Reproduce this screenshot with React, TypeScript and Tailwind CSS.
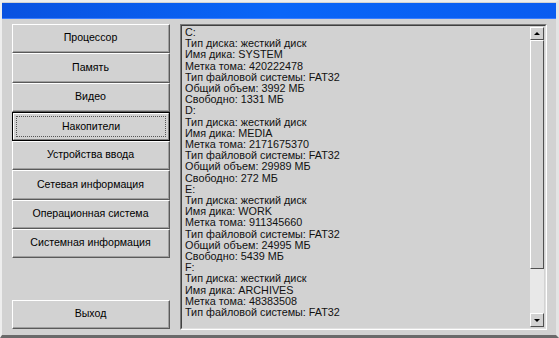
import React from "react";

const buttons = [
  "Процессор",
  "Память",
  "Видео",
  "Накопители",
  "Устройства ввода",
  "Сетевая информация",
  "Операционная система",
  "Системная информация",
];

const drives = [
  { letter: "C:", name: "SYSTEM", label: "420222478", total: "3992", free: "1331" },
  { letter: "D:", name: "MEDIA", label: "2171675370", total: "29989", free: "272" },
  { letter: "E:", name: "WORK", label: "911345660", total: "24995", free: "5439" },
];

const lines: string[] = [];
drives.forEach((d) => {
  lines.push(d.letter);
  lines.push("Тип диска: жесткий диск");
  lines.push("Имя дика: " + d.name);
  lines.push("Метка тома: " + d.label);
  lines.push("Тип файловой системы: FAT32");
  lines.push("Общий объем: " + d.total + " МБ");
  lines.push("Свободно: " + d.free + " МБ");
});
lines.push("F:", "Тип диска: жесткий диск", "Имя дика: ARCHIVES", "Метка тома: 48383508", "Тип файловой системы: FAT32");

const WinButton = ({ label, focused }: { label: string; focused?: boolean }) => {
  if (focused) {
    return (
      <div className="h-[29.3px] border border-black">
        <div className="h-full border-t border-l border-white border-r border-b border-r-[#808080] border-b-[#808080] p-[2px]">
          <div className="h-full border border-dotted border-[#555] flex items-center justify-center text-[10.6px] text-black">
            {label}
          </div>
        </div>
      </div>
    );
  }
  return (
    <div className="h-[29.3px] border-t border-l border-white border-r border-b border-r-[#5a5a5a] border-b-[#5a5a5a]">
      <div className="h-full border-r border-b border-r-[#a0a0a0] border-b-[#a0a0a0] flex items-center justify-center text-[10.6px] text-black">
        {label}
      </div>
    </div>
  );
};

export default function App() {
  return (
    <div
      className="w-[559px] h-[338px] bg-[#d2d2d2] flex flex-col border-l-2 border-t-2 border-l-[#eeeeee] border-t-[#eeeeee] border-r-[3px] border-b-[3px] border-r-[#e4e4e4] border-b-[#6a6a6a] overflow-hidden"
      style={{ fontFamily: '"Liberation Sans", Arial, sans-serif' }}
    >
      <div className="h-[16px] mt-[1px] bg-gradient-to-r from-[#0a52e0] via-[#0a66f8] to-[#0a5cf0] border-b border-[#3a7cff]" />
      <div className="flex gap-[10px] pl-[10px] pr-[9px] pt-[5px]">
        <div className="w-[158px] h-[306px] flex flex-col">
          {buttons.map((b) => (
            <WinButton key={b} label={b} focused={b === "Накопители"} />
          ))}
          <div className="mt-auto mb-[1px]">
            <WinButton label="Выход" />
          </div>
        </div>
        <div className="w-[367px] h-[306px] border-t border-l border-[#7a7a7a] border-r border-b border-r-white border-b-white">
          <div className="h-full border-t border-l border-[#404040] border-r border-b border-r-[#e0e0e0] border-b-[#e0e0e0] flex">
            <div className="flex-1 pl-[3px] pt-[1px] text-[10.8px] leading-[11.2px] text-[#111] overflow-hidden">
              {lines.map((l, i) => (
                <div key={i} className="whitespace-nowrap">{l}</div>
              ))}
            </div>
            <div className="w-[14px] my-[1px] mr-[1px] flex flex-col bg-[#e8e8e8]">
              <div className="h-[13px] border-t border-l border-white border-r border-b border-r-[#505050] border-b-[#505050] bg-[#d2d2d2] flex items-center justify-center">
                <div className="w-0 h-0 border-l-[3px] border-r-[3px] border-b-[3px] border-l-transparent border-r-transparent border-b-black" />
              </div>
              <div className="h-[229px] border-t border-l border-white border-r border-b border-r-[#505050] border-b-[#505050] bg-[#d2d2d2]" />
              <div className="flex-1" />
              <div className="h-[14px] border-t border-l border-white border-r border-b border-r-[#505050] border-b-[#505050] bg-[#d2d2d2] flex items-center justify-center">
                <div className="w-0 h-0 border-l-[3px] border-r-[3px] border-t-[3px] border-l-transparent border-r-transparent border-t-black" />
              </div>
            </div>
          </div>
        </div>
      </div>
    </div>
  );
}
